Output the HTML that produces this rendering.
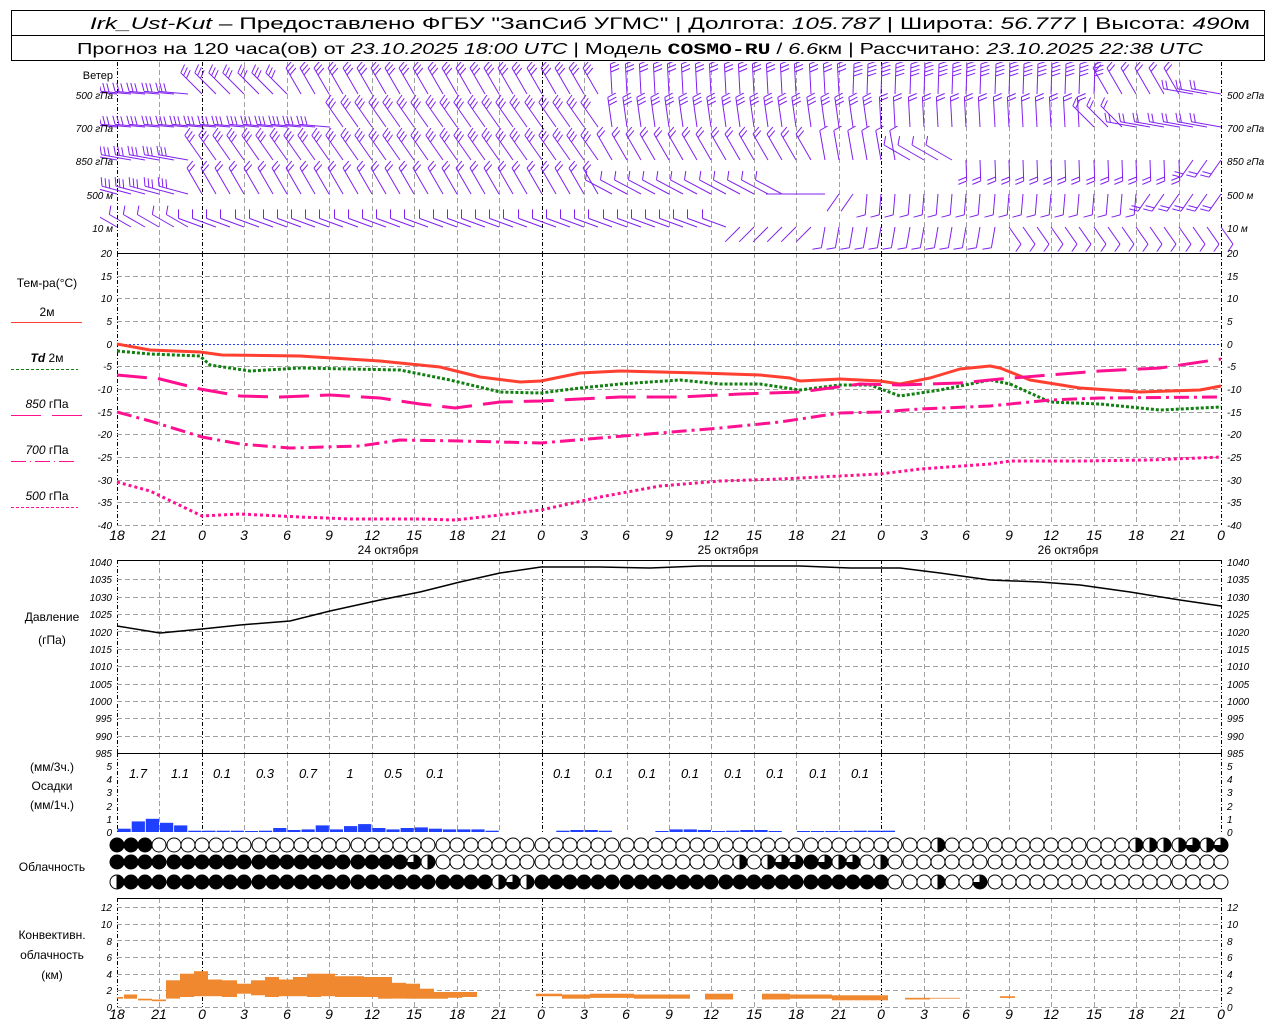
<!DOCTYPE html>
<html><head><meta charset="utf-8"><style>
html,body{margin:0;padding:0;background:#fff;}
svg{display:block;font-family:"Liberation Sans",sans-serif;}
.t{font-size:11px;fill:#000}
.ax{font-size:10px;font-style:italic;fill:#000}
.axr{font-size:10px;font-style:italic;fill:#000;text-anchor:end}
.lbl{font-size:12px;fill:#000;text-anchor:middle}
.xl{font-size:14px;font-style:italic;fill:#000;text-anchor:middle}
.pv{font-size:13px;font-style:italic;fill:#000;text-anchor:middle}
</style></head><body>
<svg id="s" width="1280" height="1024" viewBox="0 0 1280 1024" xmlns="http://www.w3.org/2000/svg">
<defs><clipPath id="wc"><rect x="100" y="62" width="1140" height="191"/></clipPath></defs>
<rect x="0" y="0" width="1280" height="1024" fill="#fff"/>
<rect x="11.5" y="10.5" width="1253" height="50" fill="none" stroke="#000"/>
<line x1="11" y1="35.5" x2="1265" y2="35.5" stroke="#000"/>
<text x="90" y="29" font-size="17" textLength="1160" lengthAdjust="spacingAndGlyphs"><tspan font-style="italic">Irk_Ust-Kut</tspan> – Предоставлено ФГБУ "ЗапСиб УГМС" | Долгота: <tspan font-style="italic">105.787</tspan> | Широта: <tspan font-style="italic">56.777</tspan> | Высота: <tspan font-style="italic">490</tspan>м</text>
<text x="77" y="54" font-size="16" textLength="1126" lengthAdjust="spacingAndGlyphs">Прогноз на 120 часа(ов) от <tspan font-style="italic">23.10.2025 18:00 UTC</tspan> | Модель <tspan font-weight="bold" font-family="Liberation Mono">COSMO-RU</tspan> / <tspan font-style="italic">6.6</tspan>км | Рассчитано: <tspan font-style="italic">23.10.2025 22:38 UTC</tspan></text>
<g id="grid"></g>
<g id="wind" clip-path="url(#wc)"></g>
<g id="draw"></g>
<text class="t" x="113" y="79" text-anchor="end">Ветер</text>
<text class="ax" x="113" y="99" text-anchor="end">500 гПа</text>
<text class="ax" x="113" y="132" text-anchor="end">700 гПа</text>
<text class="ax" x="113" y="165" text-anchor="end">850 гПа</text>
<text class="ax" x="113" y="199" text-anchor="end">500 м</text>
<text class="ax" x="113" y="232" text-anchor="end">10 м</text>
<text class="ax" x="1227" y="99">500 гПа</text>
<text class="ax" x="1227" y="132">700 гПа</text>
<text class="ax" x="1227" y="165">850 гПа</text>
<text class="ax" x="1227" y="199">500 м</text>
<text class="ax" x="1227" y="232">10 м</text>
<text class="lbl" x="47" y="287">Тем-ра(°C)</text>
<text class="lbl" x="47" y="316" font-size="11">2м</text>
<line x1="11" y1="322.5" x2="82" y2="322.5" stroke="#ff4030"/>
<text class="lbl" x="47" y="362" font-size="11"><tspan font-style="italic" font-weight="bold">Td</tspan>  2м</text>
<line x1="11" y1="369.5" x2="78" y2="369.5" stroke="#108010" stroke-dasharray="3,2"/>
<text class="lbl" x="47" y="408" font-size="11"><tspan font-style="italic">850</tspan> гПа</text>
<line x1="11" y1="415.5" x2="82" y2="415.5" stroke="#ff1090" stroke-dasharray="30,11"/>
<text class="lbl" x="47" y="454" font-size="11"><tspan font-style="italic">700</tspan> гПа</text>
<line x1="11" y1="461.5" x2="78" y2="461.5" stroke="#ff1090" stroke-dasharray="15,4,1,4"/>
<text class="lbl" x="47" y="500" font-size="11"><tspan font-style="italic">500</tspan> гПа</text>
<line x1="11" y1="507.5" x2="78" y2="507.5" stroke="#ff1090" stroke-dasharray="3,2"/>
<g class="axr">
<text x="112" y="257">20</text><text x="112" y="280">15</text><text x="112" y="302">10</text><text x="112" y="325">5</text><text x="112" y="348">0</text><text x="112" y="370">-5</text><text x="112" y="393">-10</text><text x="112" y="416">-15</text><text x="112" y="438">-20</text><text x="112" y="461">-25</text><text x="112" y="484">-30</text><text x="112" y="506">-35</text><text x="112" y="529">-40</text>
</g>
<g class="ax">
<text x="1227" y="257">20</text><text x="1227" y="280">15</text><text x="1227" y="302">10</text><text x="1227" y="325">5</text><text x="1227" y="348">0</text><text x="1227" y="370">-5</text><text x="1227" y="393">-10</text><text x="1227" y="416">-15</text><text x="1227" y="438">-20</text><text x="1227" y="461">-25</text><text x="1227" y="484">-30</text><text x="1227" y="506">-35</text><text x="1227" y="529">-40</text>
</g>
<g class="xl">
<text x="117" y="540">18</text><text x="159" y="540">21</text><text x="202" y="540">0</text><text x="244" y="540">3</text><text x="287" y="540">6</text><text x="329" y="540">9</text><text x="372" y="540">12</text><text x="414" y="540">15</text><text x="457" y="540">18</text><text x="499" y="540">21</text><text x="541" y="540">0</text><text x="584" y="540">3</text><text x="626" y="540">6</text><text x="669" y="540">9</text><text x="711" y="540">12</text><text x="754" y="540">15</text><text x="796" y="540">18</text><text x="839" y="540">21</text><text x="881" y="540">0</text><text x="924" y="540">3</text><text x="966" y="540">6</text><text x="1009" y="540">9</text><text x="1051" y="540">12</text><text x="1094" y="540">15</text><text x="1136" y="540">18</text><text x="1178" y="540">21</text><text x="1221" y="540">0</text>
</g>
<text class="lbl" x="388" y="554">24 октября</text>
<text class="lbl" x="728" y="554">25 октября</text>
<text class="lbl" x="1068" y="554">26 октября</text>
<text class="lbl" x="52" y="621">Давление</text>
<text class="lbl" x="52" y="644">(гПа)</text>
<g class="axr">
<text x="112" y="566">1040</text><text x="112" y="583">1035</text><text x="112" y="601">1030</text><text x="112" y="618">1025</text><text x="112" y="636">1020</text><text x="112" y="653">1015</text><text x="112" y="670">1010</text><text x="112" y="688">1005</text><text x="112" y="705">1000</text><text x="112" y="722">995</text><text x="112" y="740">990</text><text x="112" y="757">985</text>
</g>
<g class="ax">
<text x="1227" y="566">1040</text><text x="1227" y="583">1035</text><text x="1227" y="601">1030</text><text x="1227" y="618">1025</text><text x="1227" y="636">1020</text><text x="1227" y="653">1015</text><text x="1227" y="670">1010</text><text x="1227" y="688">1005</text><text x="1227" y="705">1000</text><text x="1227" y="722">995</text><text x="1227" y="740">990</text><text x="1227" y="757">985</text>
</g>
<text class="lbl" x="52" y="771">(мм/3ч.)</text>
<text class="lbl" x="52" y="790">Осадки</text>
<text class="lbl" x="52" y="809">(мм/1ч.)</text>
<g class="axr"><text x="112" y="770">5</text><text x="112" y="783">4</text><text x="112" y="796">3</text><text x="112" y="810">2</text><text x="112" y="823">1</text><text x="112" y="836">0</text></g>
<g class="ax"><text x="1227" y="770">5</text><text x="1227" y="783">4</text><text x="1227" y="796">3</text><text x="1227" y="810">2</text><text x="1227" y="823">1</text><text x="1227" y="836">0</text></g>
<g class="pv">
<text x="138" y="778">1.7</text><text x="180" y="778">1.1</text><text x="222" y="778">0.1</text><text x="265" y="778">0.3</text><text x="308" y="778">0.7</text><text x="350" y="778">1</text><text x="393" y="778">0.5</text><text x="435" y="778">0.1</text>
<text x="562" y="778">0.1</text><text x="604" y="778">0.1</text><text x="647" y="778">0.1</text><text x="690" y="778">0.1</text><text x="733" y="778">0.1</text><text x="775" y="778">0.1</text><text x="818" y="778">0.1</text><text x="860" y="778">0.1</text>
</g>
<text class="lbl" x="52" y="871">Облачность</text>
<text class="lbl" x="52" y="939">Конвективн.</text>
<text class="lbl" x="52" y="959">облачность</text>
<text class="lbl" x="52" y="979">(км)</text>
<g class="axr"><text x="112" y="911">12</text><text x="112" y="928">10</text><text x="112" y="945">8</text><text x="112" y="961">6</text><text x="112" y="978">4</text><text x="112" y="994">2</text><text x="112" y="1011">0</text></g>
<g class="ax"><text x="1227" y="911">12</text><text x="1227" y="928">10</text><text x="1227" y="945">8</text><text x="1227" y="961">6</text><text x="1227" y="978">4</text><text x="1227" y="994">2</text><text x="1227" y="1011">0</text></g>
<g class="xl">
<text x="117" y="1019">18</text><text x="159" y="1019">21</text><text x="202" y="1019">0</text><text x="244" y="1019">3</text><text x="287" y="1019">6</text><text x="329" y="1019">9</text><text x="372" y="1019">12</text><text x="414" y="1019">15</text><text x="457" y="1019">18</text><text x="499" y="1019">21</text><text x="541" y="1019">0</text><text x="584" y="1019">3</text><text x="626" y="1019">6</text><text x="669" y="1019">9</text><text x="711" y="1019">12</text><text x="754" y="1019">15</text><text x="796" y="1019">18</text><text x="839" y="1019">21</text><text x="881" y="1019">0</text><text x="924" y="1019">3</text><text x="966" y="1019">6</text><text x="1009" y="1019">9</text><text x="1051" y="1019">12</text><text x="1094" y="1019">15</text><text x="1136" y="1019">18</text><text x="1178" y="1019">21</text><text x="1221" y="1019">0</text>
</g>
</svg>
<script>
(function(){
var NS="http://www.w3.org/2000/svg",G=document.getElementById("grid"),D=document.getElementById("draw"),W=document.getElementById("wind");
function el(p,tag,a){var e=document.createElementNS(NS,tag);for(var k in a)e.setAttribute(k,a[k]);p.appendChild(e);return e;}
function X(k){return 117+k*1104/26;}
var panels=[[62,253],[253,525],[560,753],[753,832],[898,1007]];
panels.forEach(function(p){
 for(var k=0;k<=26;k++){var x=Math.round(X(k))+0.5;var day=(k%8==2)||k==0||k==26;
  el(G,"line",{x1:x,y1:p[0],x2:x,y2:p[1],stroke:day?"#000":"#a0a0a0","stroke-dasharray":day?"4,2,1,2":"5,3"});}
});
function hl(y,c,d){el(G,"line",{x1:117,y1:y,x2:1221,y2:y,stroke:c,"stroke-dasharray":d||""});}
for(var v=15;v>=-40;v-=5){var y=Math.round(253+(20-v)*4.533)+0.5;hl(y,v==0?"#2040ff":"#a0a0a0",v==0?"2,2":"5,3");}
for(var i=1;i<=11;i++){hl(Math.round(562+i*17.36)+0.5,"#a0a0a0","5,3");}
for(var i=0;i<=6;i++){hl(Math.round(907+i*16.67)+0.5,"#a0a0a0","5,3");}
hl(253.5,"#000");hl(560.5,"#000");hl(753.5,"#000");hl(898.5,"#000");
function pl(pts,c,w,d){el(D,"polyline",{points:pts,fill:"none",stroke:c,"stroke-width":w,"stroke-dasharray":d||"","stroke-linejoin":"round"});}
pl("117,344 150,350 200,352 222,355 300,356 380,361 440,367 480,377 520,382 541,381 580,373 620,371 700,373 760,375 790,378 800,381 840,379 880,381 900,384 930,378 960,369 990,366 1000,368 1030,380 1080,388 1140,392 1200,390 1221,386","#ff4030",3);
pl("117,351 150,354 200,356 210,365 250,371 300,368 400,370 450,380 500,392 541,393 580,388 620,384 680,380 720,384 760,384 800,390 840,385 870,385 900,396 940,390 990,380 1010,384 1050,402 1100,404 1160,410 1221,407","#108010",3,"3,2");
pl("117,375 160,379 200,389 240,396 280,397 330,395 380,398 420,404 455,408 500,402 541,401 620,397 680,397 740,394 800,392 860,384 900,385 960,383 1000,379 1050,375 1100,371 1160,368 1221,359","#ff1090",3,"30,11");
pl("117,412 150,421 202,437 240,444 290,448 360,446 400,440 460,441 541,443 600,438 660,433 720,428 780,422 840,413 880,412 920,409 990,406 1050,400 1100,398 1221,397","#ff1090",3,"15,5,3,5");
pl("117,482 150,491 202,516 240,514 300,517 350,519 420,519 455,520 500,515 541,510 600,497 660,486 720,481 780,479 840,476 880,474 920,469 990,464 1010,461 1080,461 1150,460 1221,457","#ff1090",3,"3,3");
pl("117,626 160,633 202,629 240,625 290,621 330,611 380,600 420,592 460,582 500,573 541,567 600,567 650,568 700,566 800,566 850,568 900,568 940,573 990,580 1040,582 1080,585 1130,592 1180,600 1221,606","#000",1.5);
var C="#8020f0";
function barb(xs,ys,phi,n,L){var r=phi*Math.PI/180,ux=Math.sin(r),uy=-Math.cos(r);
 var tx=xs+ux*L,ty=ys+uy*L;var d="M"+xs+","+ys+"L"+tx.toFixed(1)+","+ty.toFixed(1);
 var f=(phi+70)*Math.PI/180,fx=Math.sin(f)*9,fy=-Math.cos(f)*9;
 for(var i=0;i<n;i++){var px=tx-ux*i*4,py=ty-uy*i*4;d+="M"+px.toFixed(1)+","+py.toFixed(1)+"l"+fx.toFixed(1)+","+fy.toFixed(1);}
 el(W,"path",{d:d,stroke:C,fill:"none","stroke-width":1});}
function seg(x,t){for(var i=0;i<t.length;i++){if(x<t[i][0])return t[i];}return t[t.length-1];}
var rows=[
[94,30,[[200,-85,3],[300,-45,3],[600,-30,3],[850,-3,3],[1100,2,4],[1180,-30,2],[1300,-80,2]]],
[127,30,[[330,-85,3],[600,-35,3],[880,-8,3],[1090,-3,2],[1130,-45,2],[1300,-80,2]]],
[160,30,[[200,-80,3],[600,-35,3],[820,-30,2],[900,-10,1],[960,-60,1],[1180,178,2],[1300,215,2]]],
[194,30,[[200,-75,3],[600,-30,2],[790,-62,1],[830,-90,0],[860,215,0],[1150,185,1],[1300,215,2]]],
[227,25,[[200,-60,1],[740,-70,1],[820,225,0],[1000,190,1],[1300,145,1]]]
];
rows.forEach(function(r){for(var j=0;j<=78;j++){var x=Math.round(117+j*14.154);var c=seg(x,r[2]);
 var L=r[1];if(c[1]>90&&c[1]<270)L=21;barb(x,r[0],c[1],c[2],L);}});
var pv=[0.25,0.8,1.0,0.7,0.5,0.1,0.1,0.1,0.1,0.05,0.1,0.3,0.15,0.2,0.5,0.2,0.45,0.6,0.3,0.2,0.3,0.35,0.25,0.2,0.2,0.2,0.1];
var extra={31:0.1,32:0.15,33:0.15,34:0.1,38:0.05,39:0.2,40:0.2,41:0.15,42:0.05,43:0.1,44:0.15,45:0.15,46:0.05,48:0.05,49:0.05,50:0.05,51:0.05,52:0.1,53:0.1,54:0.1};
for(var i=0;i<55;i++){var v=i<pv.length?pv[i]:(extra[i]||0);if(!v)continue;var h=Math.max(1,v*13.2);
 el(D,"rect",{x:(117+i*14.154+0.5).toFixed(1),y:(832-h).toFixed(1),width:13.2,height:h.toFixed(1),fill:"#2040ff"});}
function circ(cx,cy,f){var R=7;el(D,"circle",{cx:cx,cy:cy,r:R,fill:f>=1?"#000":"#fff",stroke:"#000","stroke-width":1});
 if(f>0&&f<1){var a=f*2*Math.PI;var ex=cx+R*Math.sin(a),ey=cy-R*Math.cos(a);
  el(D,"path",{d:"M"+cx+","+cy+"L"+cx+","+(cy-R)+"A"+R+","+R+" 0 "+(f>0.5?1:0)+" 1 "+ex.toFixed(1)+","+ey.toFixed(1)+"Z",fill:"#000"});
  el(D,"line",{x1:cx,y1:cy-R,x2:cx,y2:cy+R,stroke:"#000"});}}
var r1={0:1,1:1,2:1,58:0.5,72:0.5,73:0.5,74:0.5,75:0.5,76:0.75,77:0.5,78:0.75};
var r2={};for(var i=0;i<=20;i++)r2[i]=1;r2[21]=0.75;r2[22]=0.5;r2[44]=0.5;r2[46]=0.5;r2[47]=0.75;r2[48]=0.75;r2[49]=1;r2[50]=0.75;r2[51]=0.5;r2[52]=0.75;r2[54]=0.5;
var r3={0:0.5};for(var i=1;i<=26;i++)r3[i]=1;r3[27]=0.5;r3[28]=0.75;r3[29]=0.5;for(var i=30;i<=54;i++)r3[i]=1;r3[58]=0.5;r3[61]=0.75;
for(var i=0;i<79;i++){var cx=Math.round(117+i*14.154);circ(cx,845,r1[i]||0);circ(cx,862,r2[i]||0);circ(cx,882,r3[i]||0);}
var cb=[[117,123,1.0,1.2],[124,137,1.0,1.5],[138,152,0.8,1.0],[152,166,0.7,0.9],[166,180,1.0,3.2],[180,194,1.2,4.0],[194,208,1.3,4.3],[208,222,1.3,3.3],[222,237,1.2,3.2],[237,251,1.6,2.8],[251,265,1.4,3.2],[265,279,1.2,3.6],[279,293,1.3,3.3],[293,307,1.3,3.6],[307,321,1.2,4.0],[321,335,1.3,4.0],[335,350,1.2,3.7],[350,364,1.2,3.7],[364,378,1.2,3.6],[378,392,1.0,3.6],[392,406,1.0,2.9],[406,420,1.0,2.8],[420,434,1.0,2.2],[434,448,1.0,1.8],[448,462,1.1,1.8],[462,477,1.2,1.8],
[536,562,1.3,1.6],[562,590,1.0,1.5],[590,634,1.1,1.6],[634,690,1.0,1.5],[705,733,0.9,1.6],[762,790,0.9,1.6],[790,832,1.0,1.5],[832,888,0.8,1.4],[905,930,0.9,1.1],[930,960,1.0,1.1],[1000,1015,1.1,1.3]];
cb.forEach(function(b){var y1=1007-b[3]*8.33,y2=1007-b[2]*8.33;el(D,"rect",{x:b[0],y:y1.toFixed(1),width:b[1]-b[0],height:(y2-y1).toFixed(1),fill:"#f08830"});});
})();
</script>
</body></html>
